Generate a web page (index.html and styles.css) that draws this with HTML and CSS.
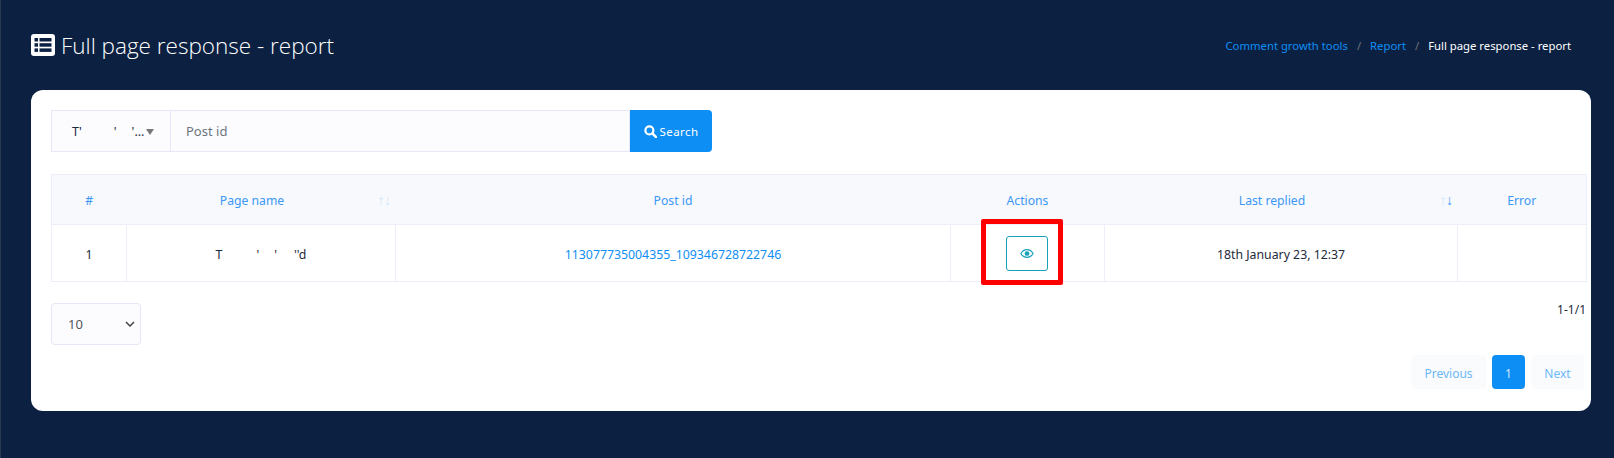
FILE: index.html
```html
<!DOCTYPE html>
<html>
<head>
    <title>Full page response - report</title>
    <link rel="stylesheet" href="styles.css">
</head>
<body>
    <div class="page">
        <div class="page-header">
            <h1 class="page-title">
                <svg class="title-icon" viewBox="0 0 24 22"><rect width="24" height="22" rx="3" fill="#fff"/><g fill="#0c2142"><rect x="3.500" y="4" width="3.500" height="3.500"/><rect x="3.500" y="9.200" width="3.500" height="3.500"/><rect x="3.500" y="14.400" width="3.500" height="3.500"/><rect x="8.500" y="4" width="12" height="3.500"/><rect x="8.500" y="9.200" width="12" height="3.500"/><rect x="8.500" y="14.400" width="12" height="3.500"/></g></svg>
                Full page response - report
            </h1>
            <div class="breadcrumb">
                <a href="#">Comment growth tools</a>
                <span class="sep">/</span>
                <a href="#">Report</a>
                <span class="sep">/</span>
                <span class="current">Full page response - report</span>
            </div>
        </div>

        <div class="card">
            <div class="search-group">
                <div class="page-select"><span class="select-text">T'<i class="blank b1"></i>'<i class="blank b2"></i>'...</span><b class="caret"></b></div>
                <div class="post-input">Post id</div>
                <button class="search-btn">
                    <svg class="search-icon" viewBox="0 0 14 14"><circle cx="5.800" cy="5.800" r="4.300" fill="none" stroke="#fff" stroke-width="2.400"/><path d="M9 9l4 4" stroke="#fff" stroke-width="2.800" stroke-linecap="round"/></svg>
                    Search
                </button>
            </div>

            <table class="report">
                <colgroup>
                    <col class="c-num"><col class="c-name"><col class="c-post"><col class="c-act"><col class="c-last"><col class="c-err">
                </colgroup>
                <thead>
                    <tr>
                        <th>#</th>
                        <th class="sortable">Page name<span class="sort"><i>↑</i><i>↓</i></span></th>
                        <th>Post id</th>
                        <th>Actions</th>
                        <th class="sortable">Last replied<span class="sort"><i>↑</i><i class="on">↓</i></span></th>
                        <th>Error</th>
                    </tr>
                </thead>
                <tbody>
                    <tr>
                        <td>1</td>
                        <td>T<i class="blank b3"></i>'<i class="blank b4"></i>'<i class="blank b5"></i>''d</td>
                        <td><a href="#">113077735004355_109346728722746</a></td>
                        <td class="action-cell">
                            <div class="highlight"></div>
                            <button class="view-btn">
                                <svg viewBox="0 0 16 12" class="eye"><path d="M1 6c1.700-3 4.200-4.500 7-4.500S13.300 3 15 6c-1.700 3-4.200 4.500-7 4.500S2.700 9 1 6z" fill="none" stroke="#17a2b8" stroke-width="1.300"/><circle cx="8" cy="6" r="2.700" fill="#17a2b8"/></svg>
                            </button>
                        </td>
                        <td>18th January 23, 12:37</td>
                        <td></td>
                    </tr>
                </tbody>
            </table>

            <div class="table-footer">
                <div class="per-page">10<svg viewBox="0 0 10 6" class="chev"><path d="M1 1l4 4 4-4" fill="none" stroke="#444" stroke-width="1.500"/></svg></div>
                <div class="footer-right">
                    <div class="count">1-1/1</div>
                    <div class="pagination">
                        <a class="pg-btn prev">Previous</a>
                        <a class="pg-btn active">1</a>
                        <a class="pg-btn next">Next</a>
                    </div>
                </div>
            </div>
        </div>
    </div>
</body>
</html>
```

FILE: styles.css
```css
* { box-sizing: border-box; }
html, body { margin: 0; height: 100%; overflow: hidden; }
body { background: #0c2142; font-family: "Noto Sans", "Open Sans", sans-serif; font-size: 12px; color: #1d2a3a; }
i { font-style: normal; }
a { color: #0d8ef5; text-decoration: none; }

.page { padding: 0 23px 0 30px; height: 458px; border-left: 1px solid #2a3850; }
.page-header { height: 90px; display: flex; justify-content: space-between; align-items: center; padding: 0 20px 0 0; }
.page-title { display: flex; align-items: center; gap: 6px; margin: 0; color: #fff; font-family: "Open Sans", sans-serif; font-weight: 300; font-size: 22.500px; }
.title-icon { width: 24px; height: 22px; }
.breadcrumb { display: flex; gap: 8px; font-size: 11.300px; color: #fff; }
.breadcrumb .sep { color: #6c757d; margin: 0 1px; }

.card { background: #fff; border-radius: 12px; height: 321px; padding: 20px 5px 22px 20px; }

.search-group { display: flex; width: 661px; height: 42px; }
.page-select { width: 120px; display: flex; align-items: center; padding: 0 0 0 20px; background: #fcfcff; border: 1px solid #e6e7f8; font-size: 12.500px; }
.select-text { white-space: nowrap; width: 74px; }
.caret { flex: none; border: 4px solid transparent; border-top: 6px solid #777; border-bottom: 0; margin-top: 2px; }
.post-input { flex: 1; display: flex; align-items: center; padding: 0 15px; background: #fcfcff; border: 1px solid #e6e7f8; border-left: 0; color: #6c757d; font-size: 13px; }
.search-btn { width: 82px; display: flex; align-items: center; justify-content: center; gap: 3px; border: 0; background: #0d8ef5; color: #fff; border-radius: 0 4px 4px 0; font: 400 11.500px "Noto Sans", sans-serif; letter-spacing: 0.400px; }
.search-icon { width: 13px; height: 13px; }
.blank { display: inline-block; }
.b1 { width: 32px; } .b2 { width: 15px; }
.b3 { width: 34px; } .b4 { width: 15px; } .b5 { width: 17px; }

.report { border-collapse: collapse; table-layout: fixed; width: 1535px; margin-top: 22px; }
.c-num { width: 75px; } .c-name { width: 269px; } .c-post { width: 555px; }
.c-act { width: 154px; } .c-last { width: 353px; } .c-err { width: 129px; }
.report th { height: 50px; background: #f8f9fc; color: #3a97f7; font-weight: 400; font-size: 12.200px; border-top: 1px solid #eceef9; border-bottom: 1px solid #eceef9; position: relative; text-align: center; padding: 2px 0 0; }
.report th.sortable { padding-right: 18px; }
.report th:first-child { border-left: 1px solid #eceef9; }
.report th:last-child { border-right: 1px solid #eceef9; }
.report td { height: 57px; border: 1px solid #eceef9; text-align: center; font-size: 12.300px; padding: 3px 0 0; }
.sort { position: absolute; right: 5px; top: 17px; font-size: 14px; line-height: 16px; color: #cfe6fc; letter-spacing: -0.500px; }
.sort .on { color: #3a97f7; }

.report td.action-cell { position: relative; padding: 1px 2px 0 0; }
.highlight { position: absolute; left: 30px; top: -6px; width: 82px; height: 66px; border: 5px solid #f00; border-radius: 2px; }
.view-btn { position: relative; width: 42px; height: 35px; background: #fff; border: 1px solid #17a2b8; border-radius: 3px; padding: 0; vertical-align: middle; }
.eye { width: 14px; height: 11px; display: block; margin: auto; }

.table-footer { display: flex; justify-content: space-between; margin-top: 21px; }
.per-page { width: 90px; height: 42px; display: flex; align-items: center; justify-content: space-between; padding: 0 5px 0 16px; background: #fcfcff; border: 1px solid #e6e7f8; border-radius: 4px; font-size: 13px; color: #555; }
.chev { width: 10px; height: 6px; }
.footer-right { display: flex; flex-direction: column; align-items: flex-end; }
.count { font-size: 12px; height: 52px; padding-top: 1px; line-height: 12px; }
.pagination { display: flex; gap: 6px; margin-right: 2px; }
.pg-btn { height: 34px; display: flex; align-items: center; justify-content: center; border-radius: 4px; font-size: 12px; background: #f9fbfd; color: #6db8f8; padding-top: 2px; }
.prev { width: 75px; } .next { width: 53px; }
.pg-btn.active { width: 33px; background: #0d8ef5; color: #cfe8fd; }
```
